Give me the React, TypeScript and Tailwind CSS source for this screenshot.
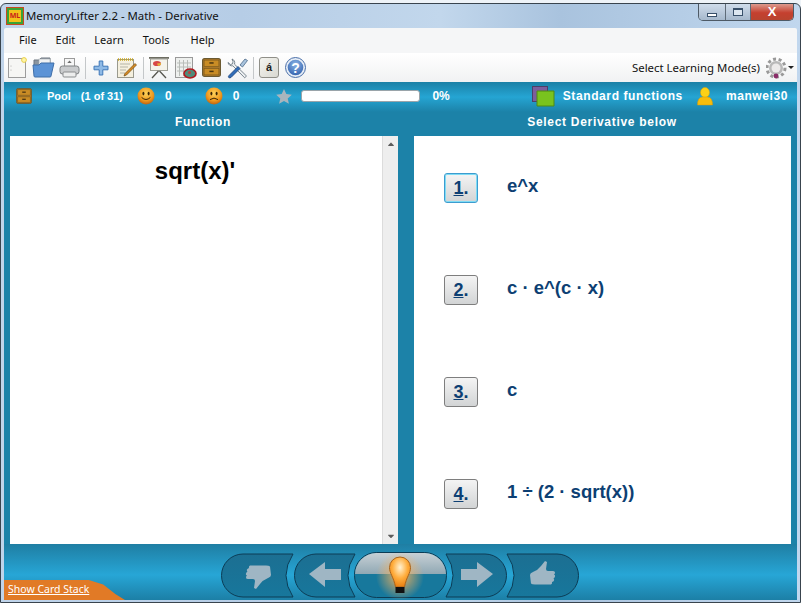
import React from 'react';
import { FaCaretUp, FaCaretDown } from 'react-icons/fa';

const THUMB = 'M15 0l2 1-1 7q0 2 2 2h5q2 0 2 1.500t-1 2q1.500.5 1 2t-1.500 2q1 1 .5 2t-2 1.500q.5 1.500-1 2.500H5q-3 0-4-1L0 14q0-2 3-3q5-2 8-6z';

function DrawerIcon({ size = 18 }: { size?: number }) {
  return (
    <svg width={size} height={size} viewBox="0 0 18 18" className="shrink-0">
      <rect x="0.5" y="0.5" width="17" height="17" rx="2" fill="#a8762a" stroke="#6b5a32" />
      <rect x="2" y="2" width="14" height="6" fill="#c98c25" stroke="#7a5a1c" strokeWidth="0.6" />
      <rect x="2" y="10" width="14" height="6" fill="#c98c25" stroke="#7a5a1c" strokeWidth="0.6" />
      <rect x="7" y="4" width="4" height="1.4" fill="#4a3510" />
      <rect x="7" y="12" width="4" height="1.4" fill="#4a3510" />
    </svg>
  );
}

function Smiley({ sad }: { sad?: boolean }) {
  const id = sad ? 'sadFace' : 'happyFace';
  return (
    <svg width="18" height="18" viewBox="0 0 18 18">
      <defs>
        <radialGradient id={id} cx="0.5" cy="0.35" r="0.7">
          <stop offset="0" stopColor="#fdd35c" />
          <stop offset="0.6" stopColor="#ef9a1e" />
          <stop offset="1" stopColor="#b5560c" />
        </radialGradient>
      </defs>
      <circle cx="9" cy="9" r="8.5" fill={`url(#${id})`} />
      <ellipse cx="6.4" cy="6.6" rx="1" ry="1.8" fill="#3a2405" />
      <ellipse cx="11.6" cy="6.6" rx="1" ry="1.8" fill="#3a2405" />
      <path
        d={sad ? 'M5 12.6Q9 9.6 13 12.6' : 'M4.6 10.4Q9 14.6 13.4 10.4'}
        fill="none"
        stroke="#3a2405"
        strokeWidth="1"
      />
    </svg>
  );
}

function ToolSep() {
  return <div className="w-px h-[22px] bg-[#c4c7c9]" />;
}

function Toolbar() {
  return (
    <div className="flex items-center h-full pl-[4px]">
      {/* new */}
      <svg width="19" height="21" viewBox="0 0 19 21">
        <rect x="0.5" y="1.5" width="17" height="19" fill="#f6f6f4" stroke="#9c9c9c" />
        <circle cx="16" cy="3" r="2.4" fill="#fff6a8" stroke="#e8cf4a" />
        <circle cx="3" cy="9" r="0.5" fill="#999" />
        <circle cx="3" cy="13" r="0.5" fill="#999" />
      </svg>
      {/* open */}
      <svg className="ml-[5px]" width="23" height="21" viewBox="0 0 23 21">
        <path d="M2 3h5l2-2h9v8H2z" fill="#8a95a0" stroke="#6d7680" />
        <rect x="7" y="2" width="11" height="7" fill="#eef1f3" stroke="#a5abb0" strokeWidth="0.6" />
        <path d="M1 8h6l2-2h13l-3 13a1 1 0 0 1-1 1H3a1 1 0 0 1-1-1z" fill="#5b93d6" stroke="#3f6ea8" />
      </svg>
      {/* print */}
      <svg className="ml-[4px]" width="21" height="21" viewBox="0 0 21 21">
        <rect x="5.5" y="1.5" width="10" height="9" fill="#f7f7f7" stroke="#9b9b9b" />
        <path d="M10.500 3.500l2.200 2.400h-4.400z" fill="#6e6e6e" />
        <rect x="1" y="9" width="19" height="8" rx="2.500" fill="#c9cbcd" stroke="#7f8284" />
        <rect x="4" y="15" width="13" height="5" rx="1" fill="#eceded" stroke="#8a8d8f" />
      </svg>
      <div className="ml-[5px]"><ToolSep /></div>
      {/* add */}
      <svg className="ml-[7px]" width="16" height="16" viewBox="0 0 16 16">
        <path d="M6.200 1h3.600v5.200H15v3.600H9.800V15H6.200V9.800H1V6.200h5.200z" fill="#8fbae6" stroke="#3f78b8" />
      </svg>
      {/* edit */}
      <svg className="ml-[8px]" width="20" height="21" viewBox="0 0 20 21">
        <rect x="0.5" y="2.500" width="16" height="18" fill="#f5f0df" stroke="#9a9a8e" />
        <path d="M1 2.500h15" stroke="#c9a71f" strokeWidth="2.500" strokeDasharray="1 1" />
        <path d="M3 7h10M3 10h8M3 13h6M3 16h5" stroke="#b5b5a8" />
        <path d="M8 16.500l10-10 1.500 1.500-10 10-2.500 1z" fill="#d98a22" stroke="#6e4a14" strokeWidth="0.7" />
      </svg>
      <div className="ml-[6px]"><ToolSep /></div>
      {/* slideshow */}
      <svg className="ml-[5px]" width="20" height="23" viewBox="0 0 20 23">
        <rect x="0" y="1" width="20" height="1.800" fill="#6d6d62" />
        <rect x="1.500" y="3" width="17" height="11.500" fill="#f5f3ea" stroke="#a0a097" />
        <ellipse cx="8" cy="7.500" rx="4" ry="2.600" fill="#d84747" />
        <path d="M8 7.500l4-.5a4 2.600 0 0 1-3 3z" fill="#e2b23a" />
        <path d="M9.500 15L3 22M10.500 15l6.500 7" stroke="#55554e" strokeWidth="1.300" fill="none" />
      </svg>
      {/* statistics */}
      <svg className="ml-[6px]" width="22" height="22" viewBox="0 0 22 22">
        <rect x="0.500" y="0.500" width="17" height="20" fill="#eef0ee" stroke="#9a9a9a" />
        <path d="M4.500 3v16M8.500 3v16M12.500 3v16M2 6h14M2 10h14M2 14h14" stroke="#b8bcb8" />
        <ellipse cx="15" cy="16.500" rx="6" ry="4.500" fill="#4e8b7a" stroke="#b0181e" strokeWidth="1.600" />
        <circle cx="14.500" cy="15.500" r="1.500" fill="#c23b3b" />
      </svg>
      {/* drawer */}
      <div className="ml-[5px]"><DrawerIcon size={19} /></div>
      {/* tools */}
      <svg className="ml-[6px]" width="22" height="22" viewBox="0 0 22 22">
        <path d="M5 2a4 4 0 0 1 2.500 5.200L19.500 19l-1.800 1.800L5.800 8.800A4 4 0 0 1 1 5.500l2.500 2 2-.6.500-2.200z" fill="#eceff1" stroke="#5c6b76" strokeWidth="0.800" />
        <path d="M2 18.500l9-9 2 2-9 9q-1.500.8-2.400-.1-.6-.9.400-1.900z" fill="#2f6cb8" stroke="#1d4478" strokeWidth="0.800" />
        <path d="M13 8l5-6 2.500 1.500-5 6.500z" fill="#a9c4de" stroke="#4d6a88" strokeWidth="0.800" />
      </svg>
      <div className="ml-[4px]"><ToolSep /></div>
      {/* keyboard key */}
      <div className="ml-[5px] w-[20px] h-[21px] rounded-[3px] border border-[#8f8f88] bg-[linear-gradient(135deg,#f4f4ef,#d9d9d2)] flex items-center justify-center font-['Liberation_Sans',sans-serif] text-[11px] font-bold text-[#222]">
        á
      </div>
      {/* help */}
      <svg className="ml-[6px]" width="21" height="21" viewBox="0 0 21 21">
        <defs>
          <radialGradient id="helpFill" cx="0.5" cy="0.3" r="0.8">
            <stop offset="0" stopColor="#8cb4e6" />
            <stop offset="1" stopColor="#2a5aa8" />
          </radialGradient>
        </defs>
        <circle cx="10.500" cy="10.500" r="10" fill="#e6edf6" stroke="#4a6fa8" />
        <circle cx="10.500" cy="10.500" r="7.800" fill="url(#helpFill)" />
        <text x="10.500" y="15.500" textAnchor="middle" fontFamily="Liberation Sans" fontSize="14" fontWeight="bold" fill="#fff">?</text>
      </svg>
    </div>
  );
}

function StatusBar() {
  return (
    <div className="h-[30px] shrink-0 flex items-center whitespace-nowrap bg-[linear-gradient(#1b80a6,#25a5d3_50%,#1c82a8)] text-white font-['Liberation_Sans',sans-serif] font-bold text-[11px] pl-[12px] pb-[2px]">
      <DrawerIcon size={16} />
      <span className="ml-[15px]">Pool</span>
      <span className="ml-[10px]">(1 of 31)</span>
      <div className="ml-[14px]"><Smiley /></div>
      <span className="ml-[10px] text-[12px]">0</span>
      <div className="ml-[33px]"><Smiley sad /></div>
      <span className="ml-[10px] text-[12px]">0</span>
      <svg className="ml-[37px] shrink-0" width="16" height="15" viewBox="0 0 16 15">
        <path d="M8 0l2.300 5.100 5.500.6-4.100 3.700 1.200 5.400L8 12.100l-4.900 2.700 1.200-5.400L.2 5.700l5.500-.6z" fill="#a9b5bd" />
      </svg>
      <div className="ml-[9px] w-[119px] h-[12px] shrink-0 rounded-[3px] bg-white border border-[#9aa4aa]" />
      <span className="ml-[12px] text-[12px]">0%</span>
      <svg className="ml-[82px] shrink-0" width="23" height="21" viewBox="0 0 23 21">
        <rect x="0.500" y="0.500" width="15" height="15" fill="#7d5e9c" stroke="#4e4068" />
        <path d="M5 5h17v15H5z" fill="#79c31e" stroke="#4f8a12" />
      </svg>
      <span className="ml-[8px] text-[12px] tracking-[0.6px]">Standard functions</span>
      <svg className="ml-[14px] shrink-0" width="16" height="19" viewBox="0 0 16 19">
        <ellipse cx="8" cy="5.500" rx="4.500" ry="5" fill="#fcd116" stroke="#e0a000" strokeWidth="0.500" />
        <path d="M0.500 18q0-8 5-8h5q5 0 5 8z" fill="#f7bd0c" stroke="#d89800" strokeWidth="0.500" />
      </svg>
      <span className="ml-[13px] text-[12px] tracking-[0.6px]">manwei30</span>
    </div>
  );
}

const answers = [
  { key: '1', text: 'e^x', focused: true },
  { key: '2', text: 'c · e^(c · x)' },
  { key: '3', text: 'c' },
  { key: '4', text: '1 ÷ (2 · sqrt(x))' },
];

function AnswerRow({ item }: { item: (typeof answers)[number] }) {
  return (
    <div className="h-[102px] shrink-0 flex items-start">
      <div
        className={
          'w-[34px] h-[30px] rounded-[3px] border bg-[linear-gradient(#f4f4f4,#d2d4d5)] flex items-center justify-center text-[18px] font-bold text-[#0d3f73] ' +
          (item.focused ? 'border-[#3c9ccf] shadow-[inset_0_0_0_1px_#7fdcf5]' : 'border-[#7e7e7e]')
        }
      >
        <span className="underline">{item.key}</span>.
      </div>
      <div className="ml-[29px] -mt-[1px] text-[18.500px] leading-[28px] font-bold text-[#0d3f73]">{item.text}</div>
    </div>
  );
}

function BottomNav() {
  return (
    <svg width="360" height="50" viewBox="0 0 360 50" className="block">
      <defs>
        <linearGradient id="pillFill" x1="0" y1="0" x2="0" y2="1">
          <stop offset="0" stopColor="#1c6f92" />
          <stop offset="1" stopColor="#17779c" />
        </linearGradient>
        <linearGradient id="bulbTop" x1="0" y1="0" x2="0" y2="1">
          <stop offset="0" stopColor="#c7d0d5" />
          <stop offset="1" stopColor="#90a8b4" />
        </linearGradient>
        <radialGradient id="bulbGlow">
          <stop offset="0" stopColor="#ffb45a" stopOpacity="0.95" />
          <stop offset="1" stopColor="#ffb45a" stopOpacity="0" />
        </radialGradient>
        <radialGradient id="bulbFill" cx="0.5" cy="0.35" r="0.65">
          <stop offset="0" stopColor="#fff2d2" />
          <stop offset="0.55" stopColor="#ffae3e" />
          <stop offset="1" stopColor="#e97f10" />
        </radialGradient>
      </defs>
      {/* outer pills */}
      <path d="M22 4h50q-14 21.500 0 43H22a21.500 21.500 0 0 1 0-43z" fill="url(#pillFill)" stroke="#0c3c55" />
      <path d="M95 4h39q-14 21.500 0 43H95a21.500 21.500 0 0 1 0-43z" fill="url(#pillFill)" stroke="#0c3c55" />
      <path d="M225 4h39a21.500 21.500 0 0 1 0 43h-39q14-21.500 0-43z" fill="url(#pillFill)" stroke="#0c3c55" />
      <path d="M286 4h50a21.500 21.500 0 0 1 0 43h-50q14-21.500 0-43z" fill="url(#pillFill)" stroke="#0c3c55" />
      {/* center pill */}
      <rect x="133.500" y="2.500" width="92" height="45" rx="22" fill="#17789c" stroke="#0c3c55" />
      <path d="M155 3h49a21.500 21.500 0 0 1 21 21H134a21.500 21.500 0 0 1 21-21z" fill="url(#bulbTop)" />
      {/* arrows */}
      <path d="M88 24l16-12v7h16v11h-16v7z" fill="#9fb6c4" />
      <path d="M240 19h16v-7l16 12-16 13v-7h-16z" fill="#9fb6c4" />
      {/* bulb */}
      <ellipse cx="179" cy="26" rx="24" ry="24" fill="url(#bulbGlow)" />
      <path d="M179 7a10.500 10.500 0 0 1 10.500 10.500c0 6-4 9-6 19.500h-9c-2-10.500-6-13.500-6-19.500A10.500 10.500 0 0 1 179 7z" fill="url(#bulbFill)" stroke="#a8641c" />
      <rect x="174.500" y="37" width="9" height="6" fill="#111" />
      {/* thumbs */}
      <path d={THUMB} fill="#9fb6c4" transform="translate(50 39) scale(-1)" />
      <path d={THUMB} fill="#9fb6c4" transform="translate(309 11)" />
    </svg>
  );
}

export default function App() {
  return (
    <div className="w-[801px] h-[603px] relative overflow-hidden bg-[#eef3f8] font-['Liberation_Sans',sans-serif]">
      <div className="h-[3px]" />
      <div className="h-[600px] rounded-t-[6px] border border-[#39444e] bg-[linear-gradient(90deg,#c0d4ea,#b6cde6_30%,#c2d7ec_55%,#a9c3de_70%,#c1d7ee)] px-[3px] pb-[2px] flex flex-col">
        {/* title bar */}
        <div className="h-[24px] shrink-0 flex items-center font-['Noto_Sans',sans-serif] text-[11.400px] text-[#111]">
          <div className="w-[16px] h-[16px] bg-[#f3c21a] border-2 border-[#3aa336] outline outline-1 outline-[#c84a1e] flex items-center justify-center text-[7px] font-bold text-[#c8201a] ml-[3px]">
            ML
          </div>
          <span className="ml-[3px]">MemoryLifter 2.2 - Math - Derivative</span>
          <div className="ml-auto -mt-[7px] mr-[3px] flex h-[17px] rounded-b-[5px] border border-t-0 border-[#4e5a66] overflow-hidden">
            <div className="w-[27px] bg-[linear-gradient(#cfdceb,#a6b8cc)] border-r border-[#5e6b78] flex items-center justify-center">
              <div className="w-[10px] h-[4px] mt-[5px] bg-white border border-[#39506a]" />
            </div>
            <div className="w-[25px] bg-[linear-gradient(#cfdceb,#a6b8cc)] border-r border-[#5e6b78] flex items-center justify-center">
              <div className="w-[10px] h-[8px] bg-[#dce6f0] border border-[#39506a] border-t-2" />
            </div>
            <div className="w-[42px] bg-[linear-gradient(#dc9a8e,#c5402f_55%,#b8442f)] flex items-center justify-center text-white text-[13px] font-bold font-['Liberation_Sans',sans-serif]">
              X
            </div>
          </div>
        </div>
        {/* menu */}
        <div className="h-[25px] shrink-0 bg-[#f5f6f7] flex items-center font-['Noto_Sans',sans-serif] text-[11px] text-[#111] pl-[15px] gap-[19px] rounded-t-[2px]">
          <span>File</span>
          <span>Edit</span>
          <span>Learn</span>
          <span>Tools</span>
          <span className="ml-[2px]">Help</span>
        </div>
        {/* toolbar */}
        <div className="h-[29px] shrink-0 bg-[linear-gradient(#ffffff,#f1f2f3)] flex items-center justify-between pr-[3px]">
          <Toolbar />
          <div className="flex items-center font-['Noto_Sans',sans-serif] text-[11.400px] text-[#111]">
            <span>Select Learning Mode(s)</span>
            <svg className="ml-[6px]" width="22" height="22" viewBox="0 0 22 22">
              <circle cx="10" cy="11" r="7" fill="#b9b9b9" />
              <circle cx="10" cy="11" r="9" fill="none" stroke="#999" strokeWidth="3" strokeDasharray="3 2.600" />
              <circle cx="10" cy="11" r="4.500" fill="#eceaea" />
              <circle cx="10" cy="19" r="2.400" fill="#8a2c68" />
            </svg>
            <div className="w-0 h-0 border-x-[3px] border-x-transparent border-t-[3px] border-t-[#222]" />
          </div>
        </div>

        {/* blue body */}
        <div className="flex-1 min-h-0 flex flex-col bg-[#1c82a8] relative">
          <StatusBar />
          <div className="h-[24px] shrink-0 flex text-white font-bold text-[12px] tracking-[0.65px] whitespace-nowrap">
            <div className="w-[392px] pl-[6px] flex items-center justify-center pb-[4px]">Function</div>
            <div className="flex-1 pl-[11px] flex items-center justify-center pb-[4px] tracking-[0.7px]">Select Derivative below</div>
          </div>
          <div className="h-[408px] shrink-0 flex pl-[6px] pr-[6px]">
            <div className="w-[388px] bg-white flex">
              <div className="flex-1 flex justify-center pt-[20px] pr-[2px] text-[24px] leading-[30px] font-bold text-black">sqrt(x)'</div>
              <div className="w-[16px] bg-[#eeeeee] border-l border-[#dcdcdc] flex flex-col justify-between items-center text-[#5b5b5b] text-[10px] py-[3px]">
                <FaCaretUp />
                <FaCaretDown />
              </div>
            </div>
            <div className="ml-[16px] w-[377px] bg-white pl-[30px] pt-[37px] flex flex-col overflow-hidden">
              {answers.map(item => (
                <AnswerRow key={item.key} item={item} />
              ))}
            </div>
          </div>
          {/* bottom nav */}
          <div className="flex-1 min-h-0 bg-[linear-gradient(#1f7ea3,#27a6d6_55%,#1c7fa6)] flex justify-start pl-[217px] pt-[6px]">
            <BottomNav />
          </div>
          {/* card stack tab sits over the bottom bar */}
          <div className="absolute left-0 bottom-0 w-[121px] h-[20px] bg-[#e17a26] [clip-path:polygon(0_0,70%_0,82%_22%,92%_70%,100%_100%,0_100%)] text-white text-[10.500px] font-['Noto_Sans',sans-serif] pl-[4px] leading-[19px] underline whitespace-nowrap">
            Show Card Stack
          </div>
        </div>
      </div>
    </div>
  );
}
